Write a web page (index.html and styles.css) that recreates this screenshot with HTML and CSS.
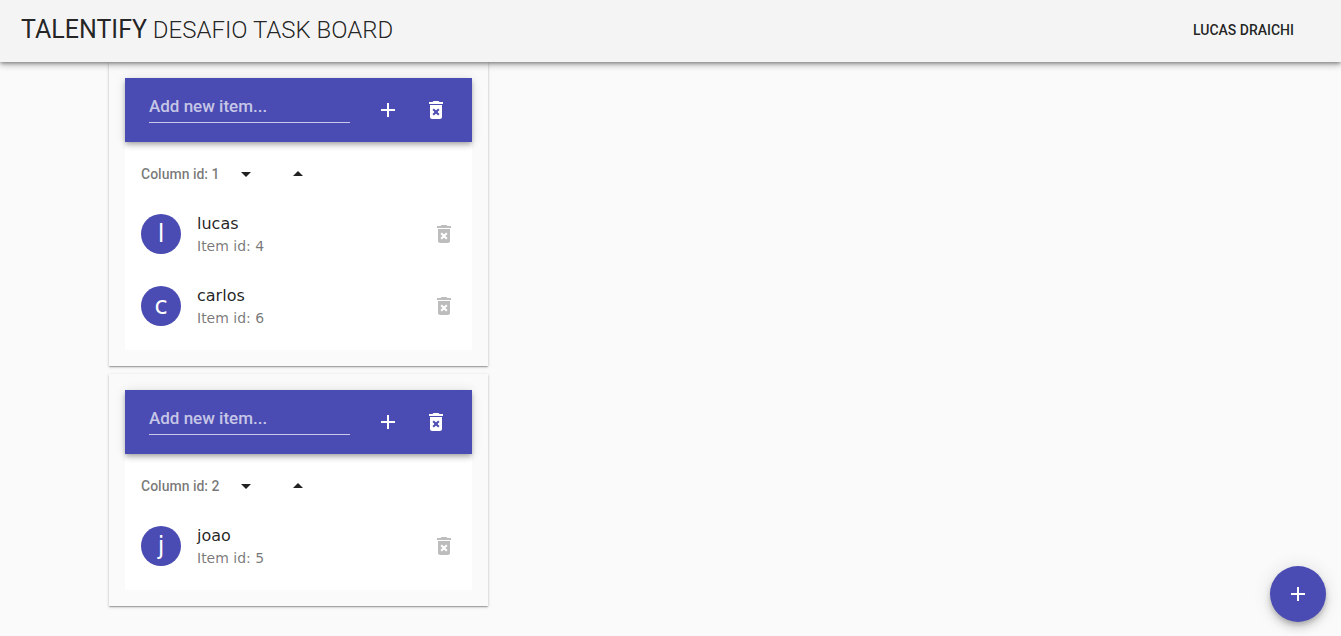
FILE: index.html
```html
<!DOCTYPE html>
<html lang="pt-BR">
<head>
<meta charset="utf-8">
<meta name="viewport" content="width=device-width, initial-scale=1">
<title>Talentify Desafio Task Board</title>
<link rel="stylesheet" href="styles.css">
</head>
<body>
<svg class="sprite" aria-hidden="true">
  <symbol id="i-add" viewBox="0 0 24 24"><path d="M19 13h-6v6h-2v-6H5v-2h6V5h2v6h6v2z"/></symbol>
  <symbol id="i-delete" viewBox="0 0 24 24"><path d="M6 19c0 1.100.9 2 2 2h8c1.100 0 2-.9 2-2V7H6v12zm2.460-7.120l1.410-1.410L12 12.590l2.120-2.120 1.410 1.410L13.410 14l2.120 2.120-1.410 1.410L12 15.410l-2.120 2.120-1.410-1.410L10.590 14l-2.130-2.120zM15.500 4l-1-1h-5l-1 1H5v2h14V4z"/></symbol>
  <symbol id="i-down" viewBox="0 0 24 24"><path d="M7 10l5 5 5-5z"/></symbol>
  <symbol id="i-up" viewBox="0 0 24 24"><path d="M7 14l5-5 5 5z"/></symbol>
</svg>
<header class="app-bar">
  <h1 class="brand"><span class="brand-name">TALENTIFY</span> DESAFIO TASK BOARD</h1>
  <button class="user" type="button">LUCAS DRAICHI</button>
</header>
<main class="board">
  <section class="column">
    <form class="column-bar">
      <input class="new-item" type="text" placeholder="Add new item..." aria-label="Add new item to column 1">
      <button class="icon-button" type="button" aria-label="Add item"><svg class="icon"><use href="#i-add"/></svg></button>
      <button class="icon-button" type="button" aria-label="Delete column"><svg class="icon"><use href="#i-delete"/></svg></button>
    </form>
    <div class="column-body">
      <div class="subheader">
        <h2 class="column-id">Column id: 1</h2>
        <button class="sort-button" type="button" aria-label="Sort descending"><svg class="icon"><use href="#i-down"/></svg></button>
        <button class="sort-button" type="button" aria-label="Sort ascending"><svg class="icon"><use href="#i-up"/></svg></button>
      </div>
      <ul class="items">
        <li class="item">
          <span class="avatar" aria-hidden="true">l</span>
          <div class="item-text"><p class="item-name">lucas</p><p class="item-id">Item id: 4</p></div>
          <button class="icon-button item-delete" type="button" aria-label="Delete lucas"><svg class="icon"><use href="#i-delete"/></svg></button>
        </li>
        <li class="item">
          <span class="avatar" aria-hidden="true">c</span>
          <div class="item-text"><p class="item-name">carlos</p><p class="item-id">Item id: 6</p></div>
          <button class="icon-button item-delete" type="button" aria-label="Delete carlos"><svg class="icon"><use href="#i-delete"/></svg></button>
        </li>
      </ul>
    </div>
  </section>
  <section class="column">
    <form class="column-bar">
      <input class="new-item" type="text" placeholder="Add new item..." aria-label="Add new item to column 2">
      <button class="icon-button" type="button" aria-label="Add item"><svg class="icon"><use href="#i-add"/></svg></button>
      <button class="icon-button" type="button" aria-label="Delete column"><svg class="icon"><use href="#i-delete"/></svg></button>
    </form>
    <div class="column-body">
      <div class="subheader">
        <h2 class="column-id">Column id: 2</h2>
        <button class="sort-button" type="button" aria-label="Sort descending"><svg class="icon"><use href="#i-down"/></svg></button>
        <button class="sort-button" type="button" aria-label="Sort ascending"><svg class="icon"><use href="#i-up"/></svg></button>
      </div>
      <ul class="items">
        <li class="item">
          <span class="avatar" aria-hidden="true">j</span>
          <div class="item-text"><p class="item-name">joao</p><p class="item-id">Item id: 5</p></div>
          <button class="icon-button item-delete" type="button" aria-label="Delete joao"><svg class="icon"><use href="#i-delete"/></svg></button>
        </li>
      </ul>
    </div>
  </section>
</main>
<button class="fab" type="button" aria-label="Add column"><svg class="icon"><use href="#i-add"/></svg></button>
</body>
</html>
```

FILE: styles.css
```css
* { box-sizing: border-box; }

body {
  margin: 0;
  background: #fafafa;
  color: rgba(0, 0, 0, .87);
  font-family: Roboto, sans-serif;
}

h1, h2, p, ul { margin: 0; padding: 0; }
ul { list-style: none; }

button {
  margin: 0;
  padding: 0;
  border: 0;
  background: none;
  color: inherit;
  font: inherit;
  cursor: pointer;
}

.sprite { display: none; }
.icon { display: block; width: 24px; height: 24px; fill: currentColor; }

.app-bar {
  position: sticky;
  top: 0;
  z-index: 2;
  display: flex;
  align-items: center;
  justify-content: space-between;
  height: 62px;
  padding: 0 31px 2px 21px;
  background: #f4f4f4;
  box-shadow: 0 2px 4px -1px rgba(0, 0, 0, .2), 0 4px 5px 0 rgba(0, 0, 0, .14), 0 1px 10px 0 rgba(0, 0, 0, .12), 0 1px 3px rgba(0, 0, 0, .2);
}

.brand { font-size: 24px; font-weight: 300; line-height: 32px; }
.brand-name { font-size: 25px; font-weight: 400; }
.user { padding: 8px 16px; font-size: 14px; font-weight: 500; line-height: 24px; }

.board {
  display: flex;
  flex-direction: column;
  gap: 8px;
  max-width: 1123px;
  margin: 0 auto;
  padding-bottom: 30px;
}

.column {
  width: 100%;
  max-width: 379px;
  padding: 16px;
  background: #fafafa;
  box-shadow: 0 1px 3px 0 rgba(0, 0, 0, .2), 0 1px 1px 0 rgba(0, 0, 0, .14), 0 2px 1px -1px rgba(0, 0, 0, .12);
}

.column-bar {
  position: relative;
  display: flex;
  align-items: center;
  height: 64px;
  padding: 0 12px 0 24px;
  background: #4a4bb3;
  color: #fff;
  box-shadow: 0 2px 4px -1px rgba(0, 0, 0, .2), 0 4px 5px 0 rgba(0, 0, 0, .14), 0 1px 10px 0 rgba(0, 0, 0, .12);
}

.new-item {
  flex: 1;
  min-width: 0;
  height: 32px;
  margin: 0 14px 6px 0;
  padding: 0 0 2px;
  border: 0;
  border-bottom: 1px solid rgba(255, 255, 255, .7);
  border-radius: 0;
  outline: 0;
  background: none;
  color: #fff;
  font: 500 17px/24px Roboto, sans-serif;
}
.new-item::placeholder { color: rgba(255, 255, 255, .7); opacity: 1; }

.icon-button {
  display: grid;
  place-items: center;
  flex: none;
  width: 48px;
  height: 48px;
  border-radius: 50%;
}

.column-body { padding: 8px 0; background: #fff; }

.subheader { display: flex; align-items: center; height: 48px; padding: 0 16px; }
.column-id { font-size: 14px; font-weight: 500; line-height: 48px; color: rgba(0, 0, 0, .54); }
.sort-button { display: grid; place-items: center; width: 52px; height: 36px; }

.item {
  display: flex;
  align-items: center;
  gap: 16px;
  height: 72px;
  padding: 0 4px 0 16px;
  font-family: "DejaVu Sans", sans-serif;
}
.avatar {
  display: grid;
  place-items: center;
  width: 40px;
  height: 40px;
  border-radius: 50%;
  background: #4a4bb3;
  color: #fff;
  font-size: 24px;
  line-height: 40px;
}
.item-text { flex: 1; min-width: 0; }
.item-name { font-size: 16px; line-height: 24px; }
.item-id { font-size: 14px; line-height: 20px; color: rgba(0, 0, 0, .54); }
.item-delete { color: rgba(0, 0, 0, .26); }

.fab {
  position: fixed;
  right: 15px;
  bottom: 14px;
  z-index: 3;
  display: grid;
  place-items: center;
  width: 56px;
  height: 56px;
  border-radius: 50%;
  background: #4a4bb3;
  color: #fff;
  box-shadow: 0 3px 5px -1px rgba(0, 0, 0, .2), 0 6px 10px 0 rgba(0, 0, 0, .14), 0 1px 18px 0 rgba(0, 0, 0, .12);
}
```
